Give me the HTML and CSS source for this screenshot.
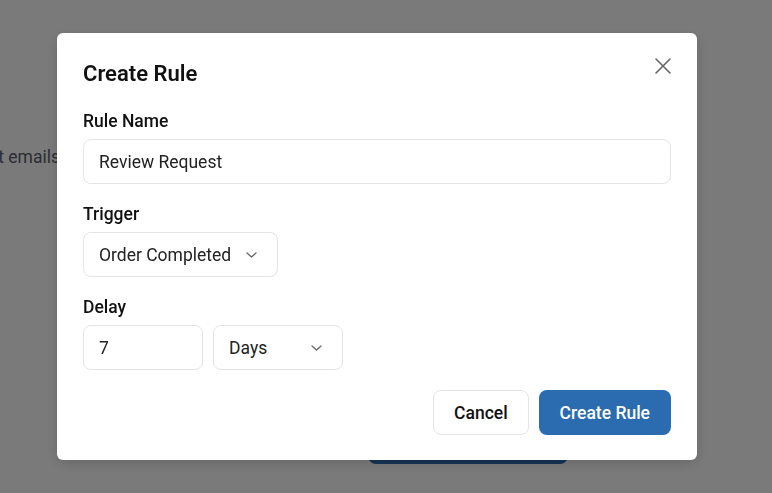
FILE: index.html
```html
<!DOCTYPE html>
<html lang="en">
<head>
    <meta charset="UTF-8">
    <title>Create Rule</title>
    <link rel="stylesheet" href="styles.css">
</head>
<body>
    <div class="page">
        <div class="page-hint"><span>Automatically send review request emails</span></div>
        <button class="page-btn">Create your first rule</button>
    </div>

    <div class="overlay">
        <div class="modal">
            <h2 class="modal-title">Create Rule</h2>
            <button class="close" aria-label="Close">
                <svg width="16" height="16" viewBox="0 0 16 16" fill="none" stroke="currentColor" stroke-width="1.6" stroke-linecap="round">
                    <path d="M1 1L15 15M15 1L1 15"/>
                </svg>
            </button>

            <div class="field">
                <label for="ruleName">Rule Name</label>
                <input id="ruleName" class="input" type="text" value="Review Request">
            </div>

            <div class="field">
                <label>Trigger</label>
                <div class="row">
                    <div class="select">
                        <span>Order Completed</span>
                        <svg class="chev" width="11" height="6" viewBox="0 0 11 6" fill="none" stroke="currentColor" stroke-width="1.3" stroke-linecap="round" stroke-linejoin="round">
                            <path d="M1 1L5.5 5L10 1"/>
                        </svg>
                    </div>
                </div>
            </div>

            <div class="field">
                <label for="delay">Delay</label>
                <div class="row">
                    <input id="delay" class="input input-num" type="text" value="7">
                    <div class="select select-unit">
                        <span>Days</span>
                        <svg class="chev" width="11" height="6" viewBox="0 0 11 6" fill="none" stroke="currentColor" stroke-width="1.3" stroke-linecap="round" stroke-linejoin="round">
                            <path d="M1 1L5.5 5L10 1"/>
                        </svg>
                    </div>
                </div>
            </div>

            <div class="actions">
                <button class="btn btn-cancel">Cancel</button>
                <button class="btn btn-primary">Create Rule</button>
            </div>
        </div>
    </div>
</body>
</html>
```

FILE: styles.css
```css
* {
    box-sizing: border-box;
}

body {
    margin: 0;
    font-family: Roboto, "Liberation Sans", sans-serif;
    color: #111;
    background: #fff;
    overflow: hidden;
}

.page {
    height: 493px;
    padding-top: 147px;
}

.page-hint {
    width: 60px;
    display: flex;
    justify-content: flex-end;
    overflow: hidden;
    white-space: nowrap;
    font-size: 17.5px;
    line-height: 20px;
    color: #5b606a;
}

.page-btn {
    display: block;
    margin: 253px 0 0 368px;
    width: 200px;
    height: 44px;
    border: 0;
    border-radius: 8px;
    background: #2b6cb0;
}

.overlay {
    position: fixed;
    inset: 0;
    background: rgba(0, 0, 0, 0.52);
    padding: 33px 0 0 57px;
}

.modal {
    position: relative;
    width: 640px;
    background: #fff;
    border-radius: 6px;
    padding: 27px 26px 25px;
    box-shadow: 0 4px 14px rgba(0, 0, 0, 0.15);
}

.modal-title {
    margin: 0 0 21px;
    font-size: 22px;
    line-height: 28px;
    font-weight: 600;
    color: #111;
}

.close {
    position: absolute;
    top: 25px;
    right: 26px;
    padding: 0;
    border: 0;
    background: none;
    color: #666;
    width: 16px;
    height: 16px;
    display: flex;
}

.field {
    margin-bottom: 18px;
}

.field label {
    display: block;
    font-size: 17.5px;
    line-height: 24px;
    font-weight: 500;
    margin-bottom: 6px;
}

.row {
    display: flex;
    gap: 10px;
}

.input {
    display: block;
    width: 100%;
    height: 45px;
    padding: 0 15px;
    border: 1px solid #e4e4e7;
    border-radius: 8px;
    font: inherit;
    font-size: 17.5px;
    color: #222;
    background: #fff;
    outline: none;
}

.input-num {
    width: 120px;
}

.select {
    display: flex;
    align-items: center;
    gap: 15px;
    height: 45px;
    padding: 0 20px 0 15px;
    border: 1px solid #e4e4e7;
    border-radius: 8px;
    font-size: 17.5px;
    color: #222;
    background: #fff;
}

.select-unit {
    width: 130px;
    justify-content: space-between;
}

.chev {
    color: #666;
}

.actions {
    display: flex;
    justify-content: flex-end;
    gap: 10px;
    margin-top: 20px;
}

.btn {
    height: 45px;
    border-radius: 8px;
    font: inherit;
    font-size: 17.5px;
    font-weight: 500;
    cursor: pointer;
}

.btn-cancel {
    padding: 0 20px;
    border: 1px solid #e4e4e7;
    background: #fff;
    color: #111;
}

.btn-primary {
    padding: 0 21px;
    border: 0;
    background: #2b6cb0;
    color: #fff;
}
```
